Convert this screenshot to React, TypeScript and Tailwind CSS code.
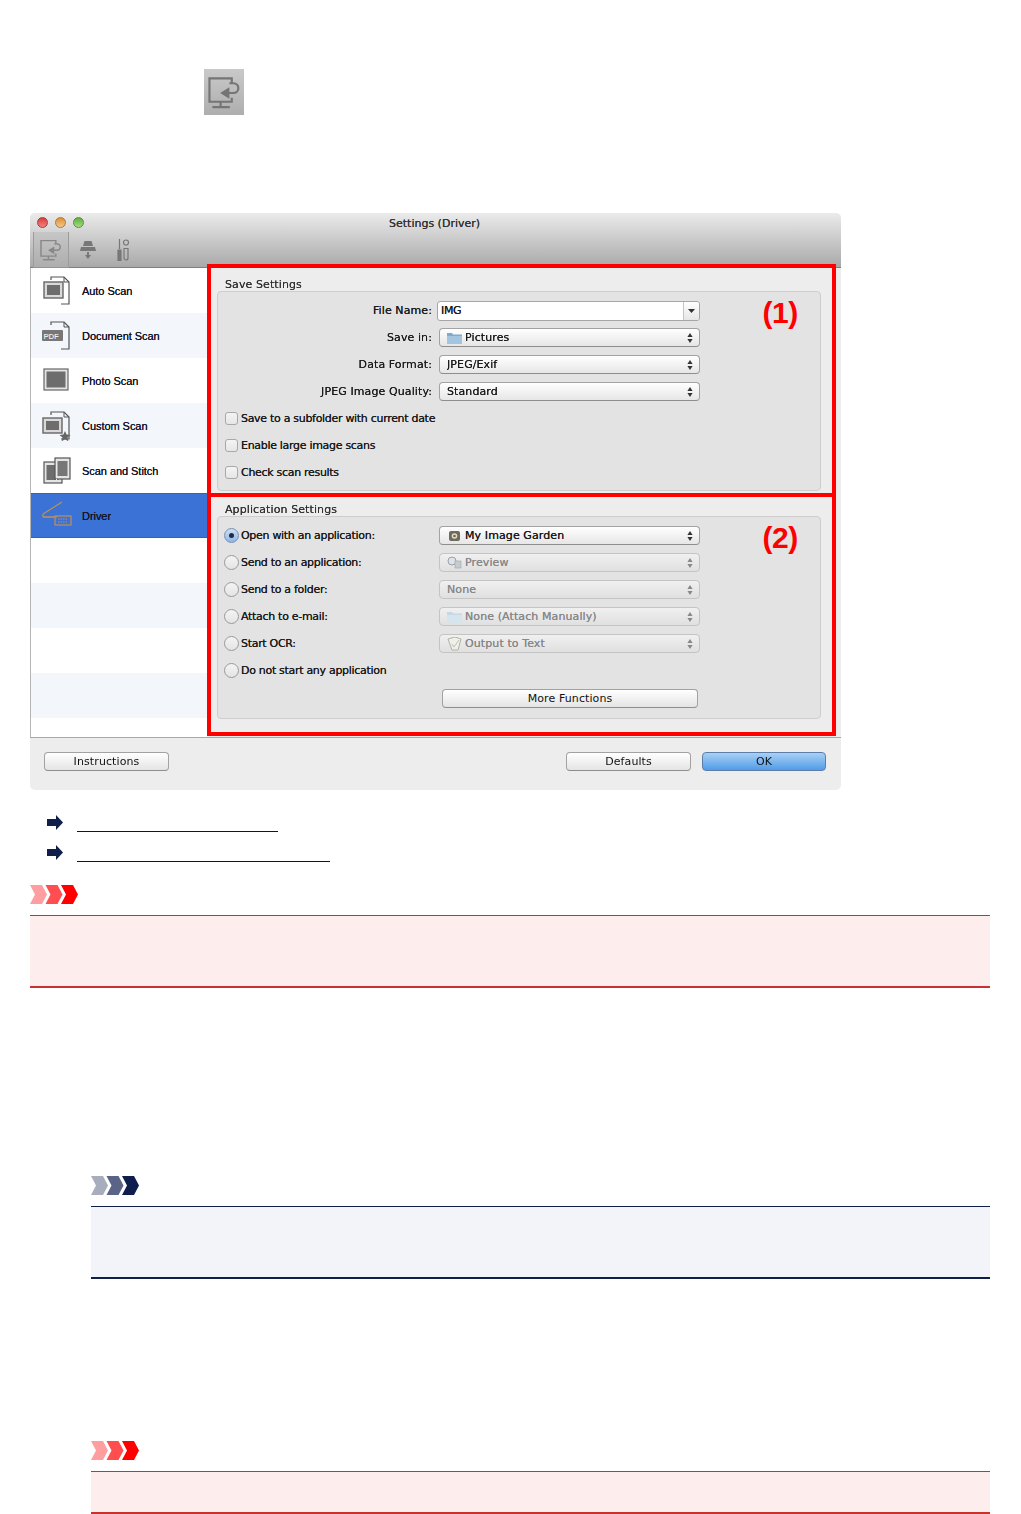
import type { ReactNode } from "react";

const UI = "font-['DejaVu_Sans',sans-serif] text-[11px] leading-none tracking-[-0.35px] text-[#1c1c1c] [text-shadow:0_0_0.6px_currentColor]";

function MonitorIcon({ className, color = "#757575" }: { className?: string; color?: string }) {
  return (
    <svg viewBox="0 0 34 34" className={className} fill="none" stroke={color} strokeWidth="2.2">
      <path d="M24.500 8V2.500H1.500v24h23v-4" />
      <path d="M13 26.500V32M4.500 32h18" />
      <path d="M22 7.500h4c7 0 7 10 0 10h-5" />
      <path d="M22 11.500l-9.500 6 9.500 6z" fill={color} stroke="none" />
    </svg>
  );
}

function PageStack({ children }: { children?: ReactNode }) {
  return (
    <svg viewBox="0 0 30 30" className="w-[30px] h-[30px] shrink-0" fill="none">
      <path d="M9 4V1h13l5 5v22h-8" stroke="#555" strokeWidth="1.2" />
      <path d="M22 1v5h5" stroke="#555" strokeWidth="1" />
      {children}
    </svg>
  );
}

function SideIcon({ kind }: { kind: string }) {
  if (kind === "auto")
    return (
      <PageStack>
        <rect x="2" y="6" width="19" height="16" fill="#d9d9d9" stroke="#666" strokeWidth="1.4" />
        <rect x="5" y="9" width="13" height="10" fill="#6d6d6d" />
      </PageStack>
    );
  if (kind === "doc")
    return (
      <PageStack>
        <rect x="0" y="9" width="21" height="11" rx="1" fill="#777" />
        <text x="1.5" y="18" fontSize="8" fontWeight="700" fontFamily="Liberation Sans" fill="#eee">PDF</text>
      </PageStack>
    );
  if (kind === "photo")
    return (
      <svg viewBox="0 0 30 30" className="w-[30px] h-[30px] shrink-0" fill="none">
        <rect x="2" y="3" width="24" height="21" fill="#e4e4e4" stroke="#666" strokeWidth="1.2" />
        <rect x="4.5" y="5.5" width="19" height="16" fill="#6d6d6d" />
      </svg>
    );
  if (kind === "custom")
    return (
      <PageStack>
        <rect x="1" y="7" width="19" height="15" fill="#d9d9d9" stroke="#666" strokeWidth="1.4" />
        <rect x="4" y="10" width="13" height="9" fill="#6d6d6d" />
        <path d="M23 20l1.600 3.600 3.900.4-3 2.500.9 3.800-3.400-2-3.400 2 .9-3.800-3-2.500 3.900-.4z" fill="#666" />
      </PageStack>
    );
  if (kind === "stitch")
    return (
      <svg viewBox="0 0 30 30" className="w-[30px] h-[30px] shrink-0" fill="none">
        <rect x="2" y="6" width="18" height="21" fill="#e4e4e4" stroke="#555" strokeWidth="1.2" />
        <rect x="4.5" y="9" width="12" height="15" fill="#6d6d6d" />
        <rect x="13" y="2" width="15" height="21" fill="#e4e4e4" stroke="#555" strokeWidth="1.2" />
        <rect x="15.5" y="5" width="10" height="15" fill="#777" />
        <path d="M14.500 5v19" stroke="#eee" strokeWidth="1" strokeDasharray="1.5 1.5" />
      </svg>
    );
  return (
    <svg viewBox="0 0 30 30" className="w-[30px] h-[30px] shrink-0 -mt-[4px]" fill="none" stroke="#c08e5a" strokeWidth="1.2">
      <path d="M1 15L20 3" />
      <path d="M1 15v3h11" />
      <path d="M1 18h14" />
      <rect x="13" y="17" width="16" height="9" />
      <path d="M16 20h10M16 23h10" strokeDasharray="1.5 1" />
    </svg>
  );
}

const SCANS = [
  { kind: "auto", label: "Auto Scan" },
  { kind: "doc", label: "Document Scan" },
  { kind: "photo", label: "Photo Scan" },
  { kind: "custom", label: "Custom Scan" },
  { kind: "stitch", label: "Scan and Stitch" },
  { kind: "driver", label: "Driver" },
];

function Sidebar() {
  return (
    <div className="w-[177px] shrink-0 bg-white border-l border-[#b5b5b5] overflow-hidden">
      {SCANS.map((s, i) => (
        <div
          key={s.kind}
          className={
            "h-[45px] flex items-center gap-[10px] pl-[11px] " +
            (s.kind === "driver"
              ? "bg-[#3a72d6] border-y border-[#2a62cc]"
              : i % 2 === 1
                ? "bg-[#f3f6fa]"
                : "bg-white")
          }
        >
          <SideIcon kind={s.kind} />
          <span className="font-['Liberation_Sans',sans-serif] text-[11px] leading-none tracking-[-0.05px] text-[#14142a] mt-[2px]">{s.label}</span>
        </div>
      ))}
      <div className="h-[45px] bg-white" />
      <div className="h-[45px] bg-[#f3f6fa]" />
      <div className="h-[45px] bg-white" />
      <div className="h-[45px] bg-[#f3f6fa]" />
    </div>
  );
}

function Stepper({ off }: { off?: boolean }) {
  return (
    <svg viewBox="0 0 6 10" className="w-[6px] h-[10px] shrink-0" fill={off ? "#888" : "#333"}>
      <path d="M3 0l2.600 4H.4zM3 10L.4 6h5.200z" />
    </svg>
  );
}

function FolderGlyph({ off }: { off?: boolean }) {
  return (
    <svg viewBox="0 0 15 12" className="w-[15px] h-[12px] shrink-0">
      <path d="M0 1h5l1 1.500h9V12H0z" fill={off ? "#c6d8e6" : "#7fa9cf"} />
      <path d="M0 4h15v8H0z" fill={off ? "#d6e4ee" : "#a3c5e0"} />
    </svg>
  );
}

function AppGlyph({ kind }: { kind: string }) {
  if (kind === "garden")
    return (
      <svg viewBox="0 0 13 13" className="w-[13px] h-[13px] shrink-0 ml-[1px] mr-[1px]">
        <rect x="1" y="2" width="11" height="10" rx="2" fill="#6b6b60" />
        <circle cx="6.500" cy="7" r="2.800" fill="#e2dcc8" />
        <circle cx="6.500" cy="7" r="1.300" fill="#8a5a3a" />
      </svg>
    );
  if (kind === "preview")
    return (
      <svg viewBox="0 0 15 13" className="w-[15px] h-[13px] shrink-0">
        <circle cx="5" cy="5" r="4" fill="#dde3e8" stroke="#9aa2a8" />
        <rect x="8" y="5" width="6" height="7" fill="#c4ccd2" stroke="#a2a2a2" strokeWidth="0.6" />
      </svg>
    );
  return (
    <svg viewBox="0 0 15 14" className="w-[15px] h-[14px] shrink-0">
      <path d="M1 2l7-2 6 2-3 11H5z" fill="#f0f0ea" stroke="#b0b0a8" />
      <path d="M5 7l2 3 5-7" fill="none" stroke="#c0c0b0" />
    </svg>
  );
}

function Select({ label, glyph, off }: { label: string; glyph?: ReactNode; off?: boolean }) {
  return (
    <div
      className={
        "w-[261px] h-[19px] flex items-center gap-[3px] pl-[7px] pr-[6px] rounded-[4px] border bg-gradient-to-b tracking-[0.1px] " +
        (off
          ? "border-[#c4c4c4] from-[#f0f0f0] to-[#e0e0e0] text-[#888]"
          : "border-[#a2a2a2] border-b-[#8e8e8e] from-white to-[#e6e6e6] text-[#1c1c1c]")
      }
    >
      {glyph}
      <span className="flex-1 truncate">{label}</span>
      <Stepper off={off} />
    </div>
  );
}

function FieldRow({ label, children }: { label: string; children: ReactNode }) {
  return (
    <div className="h-[27px] flex items-center">
      <span className="w-[214px] text-right tracking-[0.1px]">{label}</span>
      <div className="ml-[7px]">{children}</div>
    </div>
  );
}

function CheckRow({ label }: { label: string }) {
  return (
    <div className="h-[27px] flex items-center gap-[3px] pl-[7px]">
      <span className="w-[13px] h-[13px] rounded-[3px] border border-[#a8a8a8] bg-gradient-to-b from-[#f4f4f4] to-[#e6e6e6]" />
      <span className="tracking-[-0.3px]">{label}</span>
    </div>
  );
}

function RadioRow({ label, on, children }: { label: string; on?: boolean; children?: ReactNode }) {
  return (
    <div className="h-[27px] flex items-center pl-[6px]">
      <span
        className={
          "w-[15px] h-[15px] rounded-full border flex items-center justify-center shrink-0 " +
          (on ? "border-[#7a8fb0] bg-gradient-to-b from-[#cfe0f4] to-[#8fb6e4]" : "border-[#9a9a9a] bg-gradient-to-b from-[#f4f4f4] to-[#e4e4e4]")
        }
      >
        {on && <span className="w-[5px] h-[5px] rounded-full bg-[#1c2c48]" />}
      </span>
      <span className="ml-[2px] w-[198px] whitespace-nowrap tracking-[-0.3px]">{label}</span>
      {children}
    </div>
  );
}

function Group({ title, note, children, className }: { title: string; note: string; children: ReactNode; className: string }) {
  return (
    <div className={"border-4 border-[#ff0000] pl-[6px] pr-[11px] " + className}>
      <div className="h-[13px] pl-[8px] pt-[1px] text-[#333] tracking-[0.1px]">{title}</div>
      <div className="relative rounded-[4px] border border-[#cdcdcd] bg-[#e3e3e3] pt-[5px]">
        {children}
        <span className="absolute right-[22px] top-[4px] font-['Liberation_Sans',sans-serif] font-bold text-[30px] leading-[34px] text-[#ff0000] [text-shadow:none]">
          {note}
        </span>
      </div>
    </div>
  );
}

function MacButton({ label, primary, className }: { label: string; primary?: boolean; className?: string }) {
  return (
    <button
      className={
        "h-[19px] rounded-[4px] border text-center bg-gradient-to-b tracking-[0.1px] text-[#111] " +
        (primary
          ? "border-[#5c7da8] from-[#a8d0f4] to-[#4f9ce8] "
          : "border-[#a2a2a2] border-b-[#8e8e8e] from-white to-[#e4e4e4] ") +
        className
      }
    >
      {label}
    </button>
  );
}

function ToolbarIcons() {
  return (
    <div className="flex h-[36px] items-stretch pl-[3px]">
      <div className="w-[36px] border-x border-[#9c9c9c] bg-[#b4b4b4]/40 flex items-center justify-center">
        <MonitorIcon className="w-[22px] h-[22px]" color="#888" />
      </div>
      <div className="w-[37px] flex items-center justify-center">
        <svg viewBox="0 0 16 18" className="w-[16px] h-[18px]" fill="#777">
          <path d="M4.500 0h7l1.500 5H3z" />
          <path d="M1 6h14l1 4H0z" />
          <path d="M7 11h2v3h2l-3 4-3-4h2z" />
        </svg>
      </div>
      <div className="w-[34px] flex items-center justify-center">
        <svg viewBox="0 0 14 22" className="w-[14px] h-[22px]" fill="none" stroke="#777" strokeWidth="1.2">
          <path d="M3.500 0v10" />
          <path d="M2 11h3v10.500H2z" fill="#777" />
          <circle cx="10" cy="3.500" r="2.500" />
          <path d="M8 9.500h4V19a2 2 0 01-4 0z" />
        </svg>
      </div>
    </div>
  );
}

function SettingsWindow() {
  return (
    <div className={"ml-[30px] mt-[98px] w-[811px] h-[577px] flex flex-col bg-[#ededed] rounded-[5px] overflow-hidden blur-[0.4px] " + UI}>
      <div className="h-[55px] shrink-0 bg-gradient-to-b from-[#ebebeb] to-[#a9a9a9] border-b border-[#7f7f7f]">
        <div className="h-[19px] flex items-center gap-[7px] pl-[7px]">
          <span className="w-[11px] h-[11px] rounded-full bg-gradient-to-b from-[#d63c3c] to-[#f08080] border border-[#a83a3a]" />
          <span className="w-[11px] h-[11px] rounded-full bg-gradient-to-b from-[#dc9030] to-[#f4c888] border border-[#b07a30]" />
          <span className="w-[11px] h-[11px] rounded-full bg-gradient-to-b from-[#5cae3c] to-[#a4dc84] border border-[#549238]" />
          <span className="ml-[298px] mt-[1px] tracking-[0px] text-[#333]">Settings (Driver)</span>
        </div>
        <ToolbarIcons />
      </div>
      <div className="flex-1 flex min-h-0">
        <Sidebar />
        <div className="w-[629px] -mt-[4px] flex flex-col h-[472px]">
          <Group title="Save Settings" note="(1)" className="pt-[10px] pb-[3px] h-[233px]">
            <FieldRow label="File Name:">
              <div className="-ml-[2px] w-[263px] h-[20px] flex rounded-[3px] border border-[#a6a6a6] bg-white">
                <span className="flex-1 pl-[3px] self-center">IMG</span>
                <span className="w-[16px] border-l border-[#c4c4c4] bg-gradient-to-b from-white to-[#e6e6e6] flex items-center justify-center rounded-r-[3px]">
                  <svg viewBox="0 0 7 4" className="w-[7px] h-[4px]" fill="#333">
                    <path d="M0 0h7L3.500 4z" />
                  </svg>
                </span>
              </div>
            </FieldRow>
            <FieldRow label="Save in:">
              <Select label="Pictures" glyph={<FolderGlyph />} />
            </FieldRow>
            <FieldRow label="Data Format:">
              <Select label="JPEG/Exif" />
            </FieldRow>
            <FieldRow label="JPEG Image Quality:">
              <Select label="Standard" />
            </FieldRow>
            <CheckRow label="Save to a subfolder with current date" />
            <CheckRow label="Enable large image scans" />
            <CheckRow label="Check scan results" />
            <div className="h-[4px]" />
          </Group>
          <Group title="Application Settings" note="(2)" className="-mt-[4px] flex-1 pt-[6px] pb-[13px]">
            <RadioRow label="Open with an application:" on>
              <Select label="My Image Garden" glyph={<AppGlyph kind="garden" />} />
            </RadioRow>
            <RadioRow label="Send to an application:">
              <Select off label="Preview" glyph={<AppGlyph kind="preview" />} />
            </RadioRow>
            <RadioRow label="Send to a folder:">
              <Select off label="None" />
            </RadioRow>
            <RadioRow label="Attach to e-mail:">
              <Select off label="None (Attach Manually)" glyph={<FolderGlyph off />} />
            </RadioRow>
            <RadioRow label="Start OCR:">
              <Select off label="Output to Text" glyph={<AppGlyph kind="ocr" />} />
            </RadioRow>
            <RadioRow label="Do not start any application" />
            <div className="h-[29px] flex items-center pl-[224px]">
              <MacButton label="More Functions" className="w-[256px]" />
            </div>
            <div className="h-[5px]" />
          </Group>
        </div>
      </div>
      <div className="h-[53px] shrink-0 flex items-start pt-[14px] pl-[14px] pr-[15px] border-t border-[#a8a8a8]">
        <MacButton label="Instructions" className="w-[125px]" />
        <div className="flex-1" />
        <MacButton label="Defaults" className="w-[125px]" />
        <MacButton label="OK" primary className="w-[124px] ml-[11px]" />
      </div>
    </div>
  );
}

function LinkRow({ width, className }: { width: string; className?: string }) {
  return (
    <div className={"flex pl-[47px] " + className}>
      <svg viewBox="0 0 16 15" className="w-[16px] h-[15px] shrink-0" fill="#101e4a">
        <path d="M0 4h9V0l7 7.500L9 15v-4H0z" />
      </svg>
      <div className={"ml-[14px] h-[17px] border-b border-[#0000c0] " + width} />
    </div>
  );
}

function Chevrons({ colors, className }: { colors: string[]; className?: string }) {
  return (
    <svg viewBox="0 0 48 19" className={"w-[48px] h-[19px] block " + className}>
      {colors.map((c, i) => {
        const x = i * 15.5;
        return <path key={c} d={`M${x} 0h12l5 9.500-5 9.500h-12l5-9.500z`} fill={c} />;
      })}
    </svg>
  );
}

const RED = ["#ff9ea1", "#ff4d50", "#ff0000"];
const NAVY = ["#a8adbe", "#5a6486", "#0f1d4d"];

export default function App() {
  return (
    <div className="w-[1021px] h-[1514px] bg-white overflow-hidden">
      <div className="pt-[69px] pl-[204px]">
        <div className="w-[40px] h-[46px] bg-gradient-to-b from-[#c9c9c9] to-[#aeaeae] flex items-center justify-center blur-[0.4px]">
          <MonitorIcon className="w-[33px] h-[33px]" />
        </div>
      </div>

      <SettingsWindow />

      <LinkRow width="w-[201px]" className="mt-[25px]" />
      <LinkRow width="w-[253px]" className="mt-[13px]" />

      {/* Important */}
      <Chevrons colors={RED} className="ml-[30px] mt-[23px]" />
      <div className="ml-[30px] mr-[31px] mt-[11px] h-[73px] bg-[#fdeded] border-t border-[#c8322e] border-b-2 border-b-[#c8322e]" />

      {/* Note */}
      <Chevrons colors={NAVY} className="ml-[91px] mt-[188px]" />
      <div className="ml-[91px] mr-[31px] mt-[11px] h-[73px] bg-[#f3f4fa] border-t border-[#101e4a] border-b-2 border-b-[#101e4a]" />

      {/* Important */}
      <Chevrons colors={RED} className="ml-[91px] mt-[162px]" />
      <div className="ml-[91px] mr-[31px] mt-[11px] h-[43px] bg-[#fdeded] border-t border-[#c8322e] border-b-2 border-b-[#c8322e]" />
    </div>
  );
}
